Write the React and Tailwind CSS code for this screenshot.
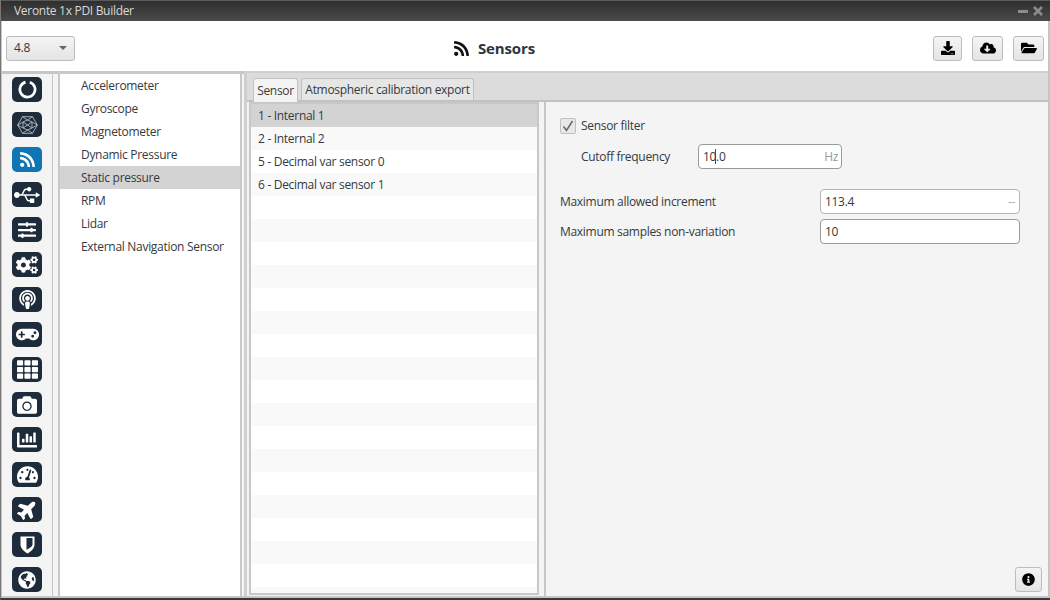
import React from "react";
import { FaRss, FaUsb, FaSlidersH, FaCogs, FaPodcast, FaGamepad, FaTh, FaCamera, FaChartBar, FaTachometerAlt, FaPlane, FaGlobeAmericas, FaDownload, FaCloudDownloadAlt, FaFolderOpen, FaInfoCircle } from "react-icons/fa";

const Ring = () => (
  <svg width="19" height="19" viewBox="0 0 19 19" fill="none"><path d="M7.500 2.100A7.600 7.600 0 1 0 11.800 2.200" stroke="#fff" strokeWidth="2.700" /></svg>
);
const Hex = () => (
  <svg width="21" height="18" viewBox="0 0 21 18" fill="none" stroke="#b4bbc0" strokeWidth="0.900">
    <path d="M5.500 0.700h10L20.300 9l-4.800 8.300h-10L0.700 9z" />
    <path d="M5.500 0.700L10.500 4l5-3.300M0.700 9L6 6l4.500-2 4.500 2 5.300 3M5.500 17.300L10.500 14l5 3.300M0.700 9L6 12l4.500 2 4.500-2 5.300-3M6 6v6M15 6v6M6 6l9 6M15 6L6 12" />
  </svg>
);
const Shield = () => (
  <svg width="15" height="18" viewBox="0 0 15 18"><path d="M0.500 0.500h14v8c0 4-3.500 7-7 9-3.500-2-7-5-7-9z" fill="#fff" /><path d="M6.500 2h6v6.500c0 2-2.800 3.800-6 5.200z" fill="#1d2b3a" /></svg>
);
const Plane = () => <FaPlane size={21} className="-rotate-45" />;

const icons = [
  [Ring], [Hex], [FaRss, 17, true], [FaUsb, 26], [FaSlidersH, 18], [FaCogs, 22], [FaPodcast, 19], [FaGamepad, 23],
  [FaTh, 21], [FaCamera, 20], [FaChartBar, 20], [FaTachometerAlt, 21], [Plane], [Shield], [FaGlobeAmericas, 18],
];

const nav = ["Accelerometer", "Gyroscope", "Magnetometer", "Dynamic Pressure", "Static pressure", "RPM", "Lidar", "External Navigation Sensor"];
const rows = ["1 - Internal 1", "2 - Internal 2", "5 - Decimal var sensor 0", "6 - Decimal var sensor 1"];

function ToolBtn({ w, children }) {
  return (
    <button className={`${w} h-[25px] flex items-center justify-center rounded-[3px] border border-[#bdbdbd] bg-gradient-to-b from-[#f4f4f4] to-[#e4e4e4] text-black`}>
      {children}
    </button>
  );
}

export default function App() {
  return (
    <div className="w-[1050px] h-[600px] flex flex-col overflow-hidden bg-[#c6c6c6] border-l border-l-[#777] border-b-2 border-b-[#3a3a3a] text-[12px] text-[#333a40] font-['Open_Sans','Noto_Sans',sans-serif] tracking-[-0.3px]">
      <div className="h-[21px] shrink-0 -ml-[1px] flex items-center justify-between pl-[14px] pr-[7px] bg-gradient-to-b from-[#2f2f2f] to-[#4a4a4a] text-[#d9d9d9] border-t border-[#5a5a5a]">
        <span>Veronte 1x PDI Builder</span>
        <div className="flex items-center gap-[5px]">
          <div className="w-[10px] h-[3px] bg-[#8c8c8c]" />
          <svg width="10" height="10" viewBox="0 0 10 10"><path d="M1 1l8 8M9 1l-8 8" stroke="#8c8c8c" strokeWidth="2.600" /></svg>
        </div>
      </div>

      <div className="h-[50px] shrink-0 bg-white ml-[1px] mr-[2px] flex items-center justify-between pl-[4px] pr-[4px] pt-[4px] relative">
        <button className="w-[69px] h-[25px] flex items-center justify-between pl-[7px] pr-[7px] rounded-[3px] border border-[#bdbdbd] bg-gradient-to-b from-[#f4f4f4] to-[#e4e4e4]">
          <span>4.8</span>
          <span className="w-0 h-0 border-l-[4px] border-r-[4px] border-t-[4px] border-l-transparent border-r-transparent border-t-[#666]" />
        </button>
        <div className="absolute left-[451px] top-[16px] flex items-center gap-[8px]">
          <FaRss size={17} color="#111" />
          <span className="font-bold text-[15px] tracking-[-0.15px] text-[#2d3640]">Sensors</span>
        </div>
        <div className="flex gap-[10px]">
          <ToolBtn w="w-[29px]"><FaDownload size={14} /></ToolBtn>
          <ToolBtn w="w-[31px]"><FaCloudDownloadAlt size={16} /></ToolBtn>
          <ToolBtn w="w-[31px]"><FaFolderOpen size={16} /></ToolBtn>
        </div>
      </div>

      <div className="flex-1 min-h-0 flex ml-[1px] mr-[2px] border-b-2 border-[#c6c6c6]">
        <div className="w-[51px] shrink-0 bg-[#f4f4f4] flex flex-col items-center pt-[3px] gap-[10px] border-r border-[#c6c6c6] border-t-[3px] border-t-[#c6c6c6]">
          {icons.map(([Icon, size, active], i) => (
            <div key={i} className={`w-[30px] h-[25px] shrink-0 rounded-[5px] flex items-center justify-center text-white ${active ? "bg-[#0f75b5]" : "bg-[#1d2b3a]"}`}>
              <Icon size={size} />
            </div>
          ))}
        </div>
        <div className="w-[5px] shrink-0 bg-[#f4f4f4] border-t-[3px] border-[#c6c6c6]" />
        <div className="w-[184px] shrink-0 bg-white border-x-2 border-t-[3px] border-[#c9c9c9] flex flex-col">
          {nav.map((n, i) => (
            <div key={n} className={`h-[23px] flex items-center pl-[21px] ${i === 4 ? "bg-[#d3d3d3]" : ""}`}>{n}</div>
          ))}
        </div>
        <div className="w-[2px] shrink-0 bg-[#f4f4f4] border-t-[3px] border-[#c6c6c6]" />
        <div className="w-[3px] shrink-0 bg-[#d0d0d0]" />
        <div className="flex-1 min-w-0 flex flex-col bg-[#f4f4f4]">
          <div className="h-[31px] shrink-0 bg-[#dcdcdc] border-b-2 border-[#c2c2c2] flex items-end pl-[6px] gap-[3px] border-t-2 border-t-[#cfcfcf]">
            <div className="h-[24px] -mb-[2px] w-[45px] flex items-center justify-center bg-[#f4f4f4] border border-b-0 border-[#c2c2c2] rounded-t-[3px]">Sensor</div>
            <div className="h-[22px] w-[173px] flex items-center justify-center bg-[#e6e6e6] border border-b-0 border-[#c2c2c2] rounded-t-[3px]">Atmospheric calibration export</div>
          </div>
          <div className="flex-1 min-h-0 flex">
            <div className="w-[290px] shrink-0 ml-[2px] mb-[1px] border-2 border-[#c8c8c8] bg-white overflow-hidden flex flex-col">
              {Array.from({ length: 22 }).map((_, i) => (
                <div key={i} className={`h-[23px] shrink-0 flex items-center pl-[7px] ${i === 0 ? "bg-[#d3d3d3]" : i % 2 ? "bg-[#f9f9f9]" : "bg-white"}`}>{rows[i]}</div>
              ))}
            </div>
            <div className="w-[7px] shrink-0 border-r-2 border-[#c8c8c8]" />
            <div className="flex-1 min-w-0 flex flex-col pl-[14px] pr-[6px] pt-[16px] pb-[4px]">
              <div className="flex items-center gap-[5px] h-[16px]">
                <div className="w-[16px] h-[16px] rounded-[2px] border border-[#c0c0c0] bg-[#e8e8e8] flex items-center justify-center">
                  <svg width="12" height="12" viewBox="0 0 12 12" fill="none"><path d="M1.500 6.500L4.500 10.500L10.500 1" stroke="#666" strokeWidth="1.500" /></svg>
                </div>
                <span>Sensor filter</span>
              </div>
              <div className="flex items-center mt-[10px] pl-[21px]">
                <span className="w-[117px]">Cutoff frequency</span>
                <div className="w-[144px] h-[25px] flex items-center justify-between rounded-[4px] border border-[#9a9a9a] bg-white pl-[4px] pr-[3px]">
                  <span className="relative">10.0<span className="absolute left-[12px] top-[1px] w-[1px] h-[15px] bg-[#444]" /></span>
                  <span className="text-[#999]">Hz</span>
                </div>
              </div>
              <div className="flex items-center mt-[20px]">
                <span className="w-[260px]">Maximum allowed increment</span>
                <div className="w-[200px] h-[25px] flex items-center justify-between rounded-[4px] border border-[#b5b5b5] bg-white pl-[4px] pr-[4px]">
                  <span>113.4</span>
                  <span className="text-[#aaa]">--</span>
                </div>
              </div>
              <div className="flex items-center mt-[5px]">
                <span className="w-[260px]">Maximum samples non-variation</span>
                <div className="w-[200px] h-[25px] flex items-center rounded-[4px] border border-[#9a9a9a] bg-white pl-[4px]">10</div>
              </div>
              <div className="mt-auto self-end"><ToolBtn w="w-[27px]"><FaInfoCircle size={13} /></ToolBtn></div>
            </div>
          </div>
        </div>
      </div>
    </div>
  );
}
